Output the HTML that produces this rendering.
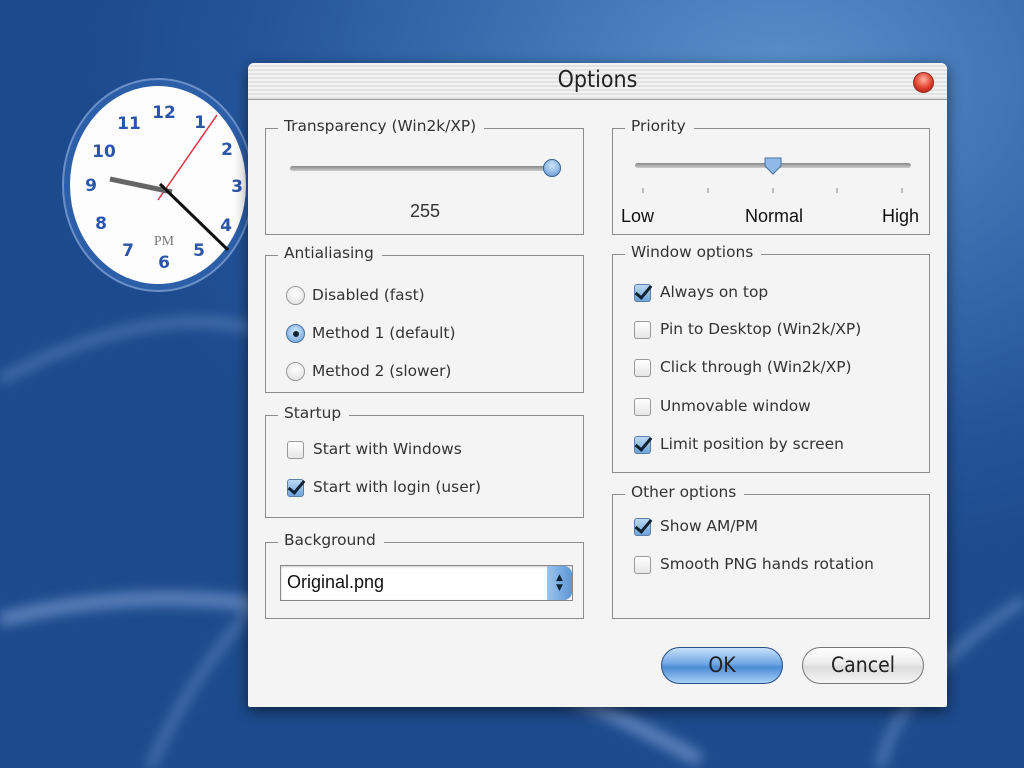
<!DOCTYPE html>
<html><head><meta charset="utf-8"><style>
*{margin:0;padding:0;box-sizing:border-box}
body{width:1024px;height:768px;overflow:hidden;position:relative;font-family:"DejaVu Sans","Liberation Sans",sans-serif;
background:radial-gradient(ellipse 700px 500px at 780px 80px,#5b8fcb 0%,#3b6fb0 40%,#24549a 75%,#1d4a8c 100%);}
.dlg{position:absolute;left:248px;top:63px;width:699px;height:644px;background:#f4f4f4;border-radius:6px 6px 2px 2px;box-shadow:0 4px 14px rgba(0,0,0,.55);}
.tb{position:absolute;left:0;top:0;width:699px;height:37px;border-radius:6px 6px 0 0;border-bottom:1px solid #9a9a9a;
background:repeating-linear-gradient(#f2f2f2 0 2px,#e2e2e2 2px 4px);}
.tb span{position:absolute;left:0;right:0;top:4px;text-align:center;font-size:23px;color:#222;font-family:"DejaVu Sans Condensed","DejaVu Sans",sans-serif}
.close{position:absolute;left:665px;top:9px;width:21px;height:21px;border-radius:50%;background:radial-gradient(circle at 50% 35%,#ffb0a0,#e0402c 55%,#a01a10);border:1px solid #8a2a20}
.g{position:absolute;border:1px solid #8c8c8c;}
.g .l{position:absolute;left:12px;top:-12px;background:#f4f4f4;padding:0 8px 0 6px;font-size:15.4px;color:#333;font-family:"DejaVu Sans",sans-serif}
.t{position:absolute;font-size:15.4px;color:#333;white-space:nowrap;font-family:"DejaVu Sans",sans-serif}
.cb{position:absolute;width:17px;height:18px;border:1px solid #9a9a9a;border-radius:3px;background:linear-gradient(#fff,#e6e6e6)}
.cb.on{background:linear-gradient(#bcd8f4,#6ea4dc);border-color:#5a7fa8}
.cb.on:after{content:"";position:absolute;left:4px;top:-3px;width:6px;height:14px;border:solid #123;border-width:0 3px 3px 0;transform:rotate(40deg)}
.rb{position:absolute;width:19px;height:19px;border-radius:50%;border:1px solid #9a9a9a;background:radial-gradient(circle at 50% 35%,#fff,#ddd)}
.rb.on{background:radial-gradient(circle at 50% 40%,#d8ecff,#5f9ad8);border-color:#4a70a0}
.rb.on:after{content:"";position:absolute;left:6px;top:6px;width:6px;height:6px;border-radius:50%;background:#123}
.track{position:absolute;height:5px;border-radius:3px;background:linear-gradient(#888,#ccc);}
.btn{position:absolute;height:37px;width:122px;border-radius:19px;text-align:center;font-size:21px;line-height:35px;color:#222;font-family:"DejaVu Sans Condensed","DejaVu Sans",sans-serif}
</style></head><body>
<svg style="position:absolute;left:0;top:0" width="1024" height="768">
<defs><filter id="b"><feGaussianBlur stdDeviation="6"/></filter></defs>
<g filter="url(#b)">
<path d="M0 620 Q300 540 700 760" stroke="rgba(170,200,245,.45)" stroke-width="14" fill="none"/>
<path d="M0 380 Q150 300 260 330" stroke="rgba(170,200,245,.3)" stroke-width="10" fill="none"/>
<path d="M150 768 Q250 540 480 470" stroke="rgba(170,200,245,.3)" stroke-width="10" fill="none"/>
<path d="M880 768 Q900 680 1024 600" stroke="rgba(170,200,245,.35)" stroke-width="10" fill="none"/>
</g>
<ellipse cx="158" cy="185" rx="95" ry="106" fill="#2d5ea8" stroke="#6a90c8" stroke-width="2"/>
<ellipse cx="158" cy="185" rx="88" ry="99" fill="#fdfdfd"/>
<g font-family="DejaVu Sans" font-weight="bold" font-size="17" fill="#2b55a8" text-anchor="middle">
<text x="164" y="118">12</text><text x="200" y="128">1</text><text x="227" y="155">2</text><text x="237" y="192">3</text><text x="226" y="231">4</text><text x="199" y="256">5</text><text x="164" y="268">6</text><text x="128" y="256">7</text><text x="101" y="229">8</text><text x="91" y="191">9</text><text x="104" y="157">10</text><text x="129" y="129">11</text></g>
<text x="164" y="245" font-family="Liberation Serif" font-size="14" fill="#777" text-anchor="middle">PM</text>
<line x1="158" y1="200" x2="217" y2="115" stroke="#e03040" stroke-width="1.5"/>
<line x1="110" y1="179" x2="172" y2="192" stroke="#666" stroke-width="5"/>
<line x1="160" y1="184" x2="228" y2="250" stroke="#111" stroke-width="3"/>
</svg>
<div class="dlg">
<div class="tb"><span>Options</span><div class="close"></div></div>
</div>
<div class="g" style="left:265px;top:128px;width:319px;height:107px"><div class="l">Transparency (Win2k/XP)</div></div>
<div class="track" style="left:290px;top:166px;width:270px"></div>
<div style="position:absolute;left:543px;top:159px;width:18px;height:18px;border-radius:50%;background:radial-gradient(circle at 50% 35%,#cfe4fa,#5b93d2);border:1px solid #3d5f90"></div>
<div class="t" style="left:410px;top:201px;font-size:18px;font-family:'Liberation Sans',sans-serif">255</div>
<div class="g" style="left:265px;top:255px;width:319px;height:138px"><div class="l">Antialiasing</div></div>
<div class="rb" style="left:286px;top:286px"></div><div class="t" style="left:312px;top:286px">Disabled (fast)</div>
<div class="rb on" style="left:286px;top:324px"></div><div class="t" style="left:312px;top:324px">Method 1 (default)</div>
<div class="rb" style="left:286px;top:362px"></div><div class="t" style="left:312px;top:362px">Method 2 (slower)</div>
<div class="g" style="left:265px;top:415px;width:319px;height:103px"><div class="l">Startup</div></div>
<div class="cb" style="left:287px;top:441px"></div><div class="t" style="left:313px;top:440px">Start with Windows</div>
<div class="cb on" style="left:287px;top:479px"></div><div class="t" style="left:313px;top:478px">Start with login (user)</div>
<div class="g" style="left:265px;top:542px;width:319px;height:77px"><div class="l">Background</div></div>
<div style="position:absolute;left:280px;top:565px;width:293px;height:36px;border:1px solid #888;background:#fff;box-shadow:inset 0 1px 2px rgba(0,0,0,.2)"></div>
<div class="t" style="left:287px;top:572px;font-size:18px;font-family:'Liberation Sans',sans-serif;color:#111">Original.png</div>
<div style="position:absolute;left:547px;top:566px;width:25px;height:34px;border-radius:0 8px 8px 0;background:linear-gradient(90deg,#9cc4ee,#5c96d6);font-size:9px;line-height:10px;text-align:center;padding-top:7px;color:#123">▲<br>▼</div>
<div class="g" style="left:612px;top:128px;width:318px;height:107px"><div class="l">Priority</div></div>
<div class="track" style="left:635px;top:163px;width:276px"></div>
<svg style="position:absolute;left:763px;top:156px" width="20" height="20"><path d="M2 2H18V10L10 18L2 10Z" fill="#8fb9e8" stroke="#4a6f9c"/></svg>
<svg style="position:absolute;left:640px;top:186px" width="270" height="10" stroke="#888"><line x1="3" y1="2" x2="3" y2="7"/><line x1="68" y1="2" x2="68" y2="7"/><line x1="133" y1="2" x2="133" y2="7"/><line x1="197" y1="2" x2="197" y2="7"/><line x1="262" y1="2" x2="262" y2="7"/></svg>
<div class="t" style="left:621px;top:206px;font-size:18px;font-family:'Liberation Sans',sans-serif;color:#111">Low</div>
<div class="t" style="left:745px;top:206px;font-size:18px;font-family:'Liberation Sans',sans-serif;color:#111">Normal</div>
<div class="t" style="left:882px;top:206px;font-size:18px;font-family:'Liberation Sans',sans-serif;color:#111">High</div>
<div class="g" style="left:612px;top:254px;width:318px;height:219px"><div class="l">Window options</div></div>
<div class="cb on" style="left:634px;top:284px"></div><div class="t" style="left:660px;top:283px">Always on top</div>
<div class="cb" style="left:634px;top:321px"></div><div class="t" style="left:660px;top:320px">Pin to Desktop (Win2k/XP)</div>
<div class="cb" style="left:634px;top:359px"></div><div class="t" style="left:660px;top:358px">Click through (Win2k/XP)</div>
<div class="cb" style="left:634px;top:398px"></div><div class="t" style="left:660px;top:397px">Unmovable window</div>
<div class="cb on" style="left:634px;top:436px"></div><div class="t" style="left:660px;top:435px">Limit position by screen</div>
<div class="g" style="left:612px;top:494px;width:318px;height:125px"><div class="l">Other options</div></div>
<div class="cb on" style="left:634px;top:518px"></div><div class="t" style="left:660px;top:517px">Show AM/PM</div>
<div class="cb" style="left:634px;top:556px"></div><div class="t" style="left:660px;top:555px">Smooth PNG hands rotation</div>
<div class="btn" style="left:661px;top:647px;border:1px solid #2a4f86;background:linear-gradient(#c8e0fa 0%,#6fa6e4 45%,#4d8bd6 55%,#a8d0f6 100%)">OK</div>
<div class="btn" style="left:802px;top:647px;border:1px solid #777;background:linear-gradient(#fff 0%,#ececec 45%,#dcdcdc 55%,#f6f6f6 100%)">Cancel</div>
</body></html>
